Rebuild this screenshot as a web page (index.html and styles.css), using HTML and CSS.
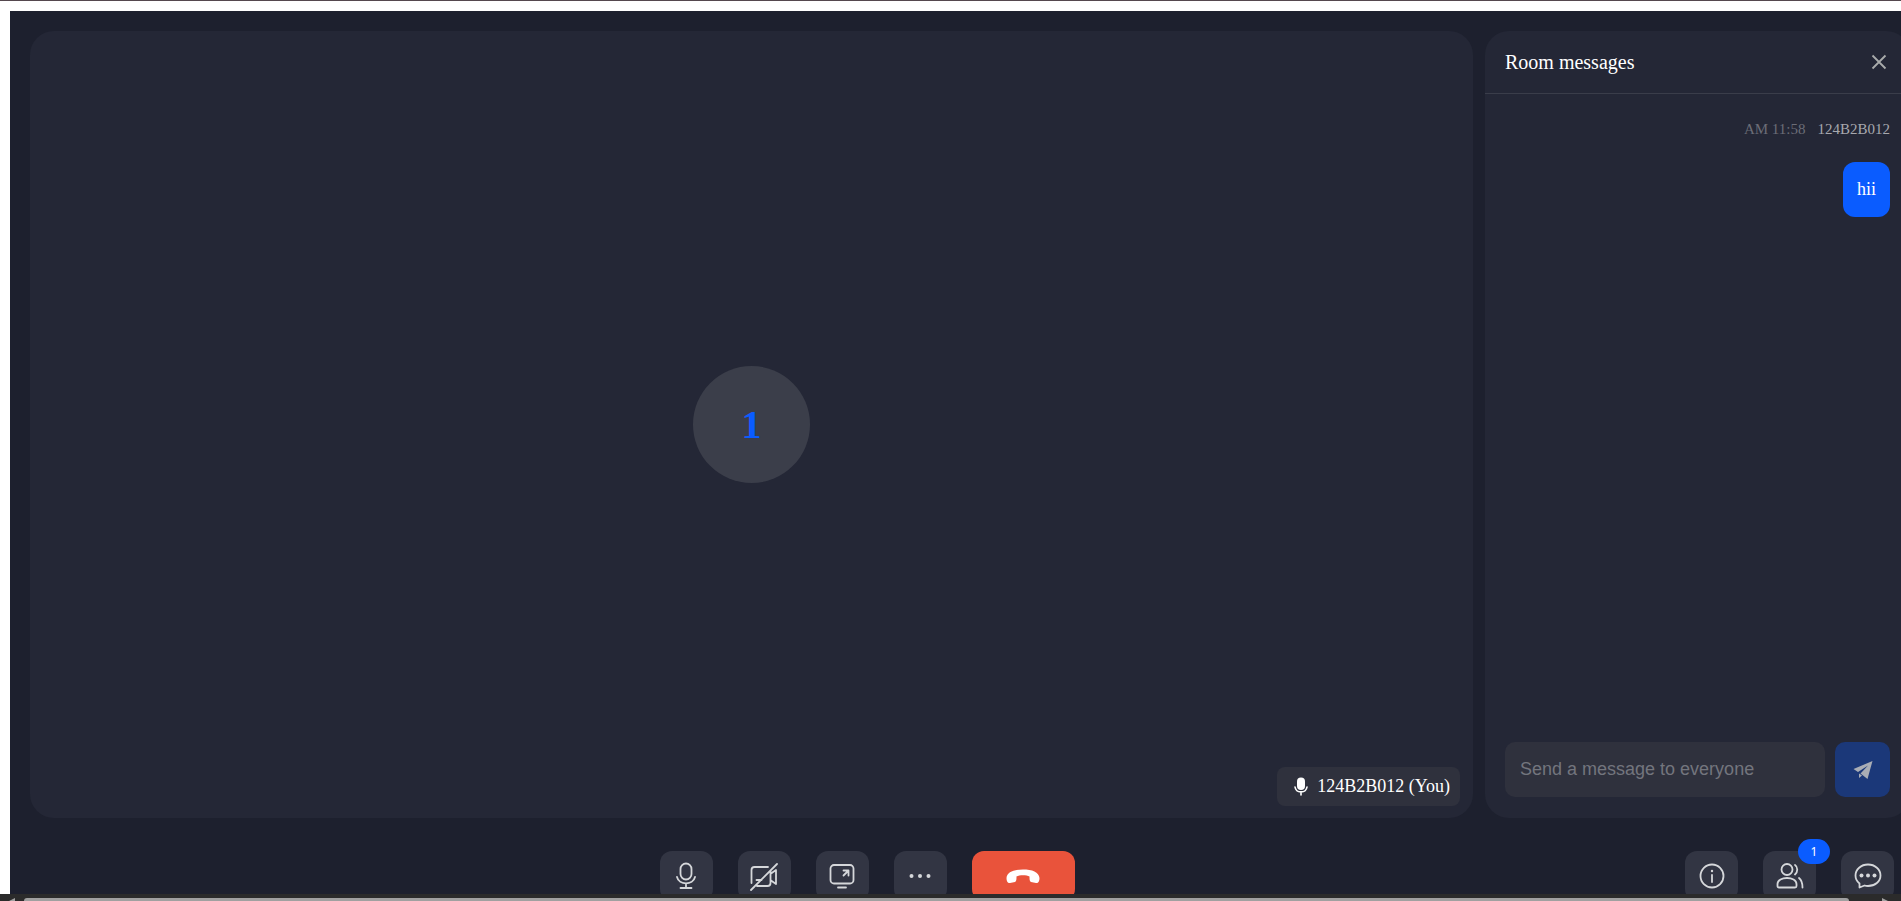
FILE: index.html
```html
<!DOCTYPE html>
<html lang="en">
<head>
  <meta charset="UTF-8" />
  <meta name="viewport" content="width=device-width, initial-scale=1.0"/>
  <title>Room</title>
  <link rel="stylesheet" href="styles.css">
</head>
<body>

<div class="viewport">
  <div class="room">
    <main class="content">
      <section class="stage">
        <div class="avatar">1</div>
        <div class="name-tag">
          <svg width="16" height="22" viewBox="0 0 16 22" fill="none" stroke="#fff" stroke-width="1.6" stroke-linecap="round">
            <rect x="4" y="1.5" width="8" height="12.500" rx="4" fill="#fff" stroke="none"/>
            <path d="M2 11c1 6.500 11 6.500 12 0M8 16v3"/>
          </svg>
          <span>124B2B012 (You)</span>
        </div>
      </section>

      <aside class="panel">
        <header class="panel-header">
          <h2>Room messages</h2>
          <button class="close" aria-label="Close">
            <svg width="24" height="24" viewBox="0 0 24 24" fill="none" stroke="#a9abab" stroke-width="1.8"><path d="M5.500 5.500l13 13M18.500 5.500l-13 13"/></svg>
          </button>
        </header>
        <div class="messages">
          <div class="meta"><time>AM 11:58</time><span>124B2B012</span></div>
          <p class="bubble">hii</p>
        </div>
        <form class="composer">
          <input type="text" aria-label="Message" placeholder="Send a message to everyone" />
          <button type="button" class="send" aria-label="Send">
            <svg width="22" height="22" viewBox="0 0 22 22" fill="#a9adb5"><path d="M20.500 2L1.500 10l4.500 3L16 6.500 8.500 14.500l7 5.500zM7 14.500v4.500l3-2.500z"/></svg>
          </button>
        </form>
      </aside>
    </main>

    <footer class="toolbar">
      <div class="controls">
        <button class="tool" aria-label="Microphone">
          <svg width="32" height="32" viewBox="0 0 32 32"><rect x="10.500" y="3.500" width="11" height="16" rx="5.500"/><path d="M7 17c2 8.500 16 8.500 18 0M16 23.500v4.500M10.500 28h11"/></svg>
        </button>
        <button class="tool" aria-label="Camera">
          <svg width="32" height="32" viewBox="0 0 32 32"><path d="M20 7H6.500Q3.500 7 3.500 10V23M9 26h10.500q3 0 3-3V11M23 13.500l5-3.500v14l-5-3.500M8.500 20h5M29 4L3 30"/></svg>
        </button>
        <button class="tool" aria-label="Share screen">
          <svg width="32" height="32" viewBox="0 0 32 32"><rect x="4.500" y="5" width="23" height="18.500" rx="3.500"/><path d="M17.500 15.500l5-5M17.500 10.500h5v5M12 27.500h8"/></svg>
        </button>
        <button class="tool" aria-label="More">
          <svg width="32" height="32" viewBox="0 0 32 32" class="dots"><circle cx="7.500" cy="16" r="2"/><circle cx="16" cy="16" r="2"/><circle cx="24.500" cy="16" r="2"/></svg>
        </button>
        <button class="tool leave" aria-label="Leave room">
          <svg width="36" height="32" viewBox="0 0 36 32"><path d="M1.500 18C2 12 9 9.500 18 9.500S34 12 34.500 18c0 3-1 5.500-3.500 5l-5-1c-1.500-.5-1.500-3-1.500-5.500-3-1.800-10-1.800-13 0 0 2.500 0 5-1.500 5.500l-5 1c-2.500.5-3.500-2-3.500-5z"/></svg>
        </button>
      </div>
      <div class="controls side">
        <button class="tool" aria-label="Room details">
          <svg width="32" height="32" viewBox="0 0 32 32"><circle cx="16" cy="16" r="11.500"/><path d="M16 15v7"/><circle cx="16" cy="11" r="1.200" class="dots"/></svg>
        </button>
        <button class="tool" aria-label="Members">
          <svg width="32" height="32" viewBox="0 0 32 32"><circle cx="13" cy="9.500" r="5.500"/><path d="M3.500 24c0-8 19-8 19 0v2q0 1.500-1.500 1.500H5q-1.500 0-1.500-1.500zM21 5c3 2 3 7 0 9.500M25 18c2.500 2 3.500 5 3.500 9.500"/></svg>
          <span class="badge">1</span>
        </button>
        <button class="tool" aria-label="Messages">
          <svg width="32" height="32" viewBox="0 0 32 32"><path d="M7.500 27.500V23.500C5 21.500 3.500 19 3.500 15.500 3.500 9.500 9 4.500 16 4.500S28.500 9.500 28.500 15.500 23 26 16 26q-2 0-3.500-.5z"/><g class="dots"><circle cx="9.500" cy="15.500" r="2"/><circle cx="16" cy="15.500" r="2"/><circle cx="22.500" cy="15.500" r="2"/></g></svg>
        </button>
      </div>
    </footer>
  </div>

  <div class="scrollbar">
    <span class="arrow left"></span>
    <span class="thumb"></span>
    <span class="arrow right"></span>
  </div>
</div>

</body>
</html>
```
FILE: styles.css
```css
* { box-sizing: border-box; }
body { margin: 0; background: #fff; font-family: "Liberation Serif", "Times New Roman", serif; color: #fff; }
button { border: none; padding: 0; cursor: pointer; }
svg { display: block; flex: none; }

.viewport { height: 100vh; display: flex; flex-direction: column; overflow: hidden; border-top: 1px solid #55484e; padding-top: 10px; }

/* the room is wider than the window, so its right edge is cut off */
.room { flex: 1; min-height: 0; margin: 0 -29px 0 10px; background: #1d202e; display: flex; flex-direction: column; overflow: hidden; }
.content { flex: 1; min-height: 0; display: flex; gap: 12px; padding: 20px 20px 0; }

.stage { position: relative; flex: 1; background: #242736; border-radius: 24px; display: flex; align-items: center; justify-content: center; }
.avatar { width: 117px; height: 117px; border-radius: 50%; background: #3b3e4a; color: #0a5cff; font-size: 40px; font-weight: bold; display: flex; align-items: center; justify-content: center; }
.name-tag { position: absolute; right: 13px; bottom: 12px; height: 39px; padding: 0 10px 0 16px; border-radius: 8px; background: #2f313d; display: flex; align-items: center; gap: 8px; font-size: 18px; }

.panel { width: 425px; background: #242736; border-radius: 24px; display: flex; flex-direction: column; }
.panel-header { height: 63px; padding: 0 19px 0 20px; border-bottom: 1px solid #3a3d4a; display: flex; align-items: center; justify-content: space-between; }
.panel-header h2 { margin: 0; font-size: 20px; font-weight: normal; }
.close { background: none; }
.messages { flex: 1; padding: 26px 20px 0; display: flex; flex-direction: column; align-items: flex-end; }
.meta { display: flex; gap: 12px; font-size: 15px; line-height: 18px; color: #a7a8ae; }
.meta time { color: #6b6d77; }
.bubble { margin: 24px 0 0; padding: 16px 14px; border-radius: 12px; background: #0a5cff; font-size: 18px; line-height: 23px; }
.composer { display: flex; gap: 10px; padding: 0 20px 21px; }
.composer input { flex: 1; min-width: 0; height: 55px; padding: 0 15px; border: none; border-radius: 10px; background: #2f313d; color: #fff; font: 18px "Liberation Sans", Arial, sans-serif; }
.composer input::placeholder { color: #73757d; }
.send { width: 55px; height: 55px; border-radius: 10px; background: #1b3879; display: flex; align-items: center; justify-content: center; }

.toolbar { height: 76px; display: flex; padding: 33px 36px 0 39px; }
.controls { flex: 1; display: flex; justify-content: center; gap: 25px; }
.side { flex: none; }
.tool { position: relative; width: 53px; height: 50px; border-radius: 12px; background: #323543; display: flex; align-items: center; justify-content: center; }
.tool svg { fill: none; stroke: #d5d7da; stroke-width: 1.8; stroke-linecap: round; stroke-linejoin: round; }
.tool .dots { fill: #d5d7da; stroke: none; }
.leave { width: 103px; background: #e9533b; }
.leave svg { fill: #fff; stroke: none; }
.badge { position: absolute; top: -12px; right: -14px; width: 32px; height: 25px; border-radius: 13px; background: #0a5cff; color: #fff; font: 12px/25px "Noto Sans", sans-serif; }

.scrollbar { height: 7px; flex: none; background: #2b2b2b; display: flex; align-items: flex-end; gap: 9px; overflow: hidden; padding: 0 13px 0 9px; }
.thumb { flex: 1; height: 3px; margin-right: 24px; background: #a0a0a0; border-radius: 3px 3px 0 0; }
.arrow { width: 6px; height: 3px; background: #a0a0a0; }
.left { clip-path: polygon(100% 0, 100% 100%, 0 100%); }
.right { clip-path: polygon(0 0, 100% 100%, 0 100%); }
```
